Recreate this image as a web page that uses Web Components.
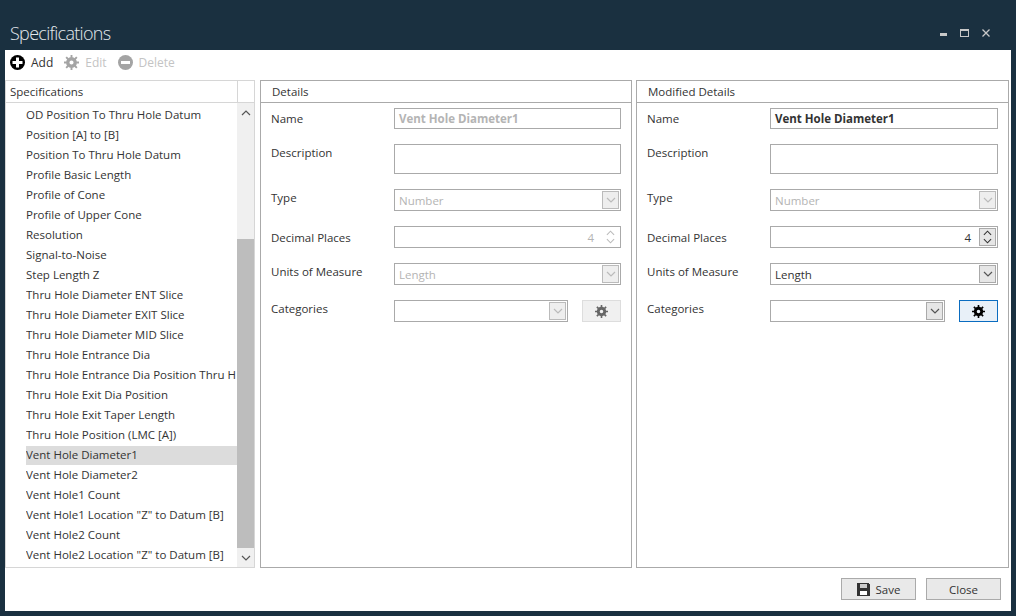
<!DOCTYPE html>
<html>
<head>
<meta charset="utf-8">
<title>Specifications</title>
<style>
  html, body { margin: 0; height: 100%; }
  body { background: #1a3040; font: 11.5px "Open Sans", sans-serif; color: #333; overflow: hidden; }
</style>
</head>
<body>
<spec-window>
  <win-titlebar slot="title">Specifications</win-titlebar>
  <spec-toolbar slot="toolbar"></spec-toolbar>
  <spec-list slot="list"></spec-list>
  <detail-panel slot="details" heading="Details" mode="readonly"></detail-panel>
  <detail-panel slot="modified" heading="Modified Details"></detail-panel>
  <dialog-button slot="footer" icon="save">Save</dialog-button>
  <dialog-button slot="footer">Close</dialog-button>
</spec-window>

<script>
const GEAR = `<svg viewBox="0 0 16 16" width="100%" height="100%"><circle cx="8" cy="8" r="4" fill="none" stroke="currentColor" stroke-width="3.6"/><path fill="none" stroke="currentColor" stroke-width="2" d="M8 0v3M8 13v3M0 8h3M13 8h3M2.3 2.3l2.2 2.2M11.5 11.5l2.2 2.2M13.7 2.3l-2.2 2.2M4.5 11.5l-2.2 2.2"/></svg>`;
const CHEVRON_DOWN = `<svg viewBox="0 0 10 6" width="10" height="6"><path d="M1 1l4 4 4-4" fill="none" stroke="currentColor" stroke-width="1.2"/></svg>`;
const CHEVRON_UP = `<svg viewBox="0 0 10 6" width="10" height="6"><path d="M1 5l4-4 4 4" fill="none" stroke="currentColor" stroke-width="1.2"/></svg>`;

class SpecWindow extends HTMLElement {
    constructor() {
        super();
        this.attachShadow({ mode: 'open' });
        this.shadowRoot.innerHTML = `
            <style>
                :host { display: flex; flex-direction: column; height: 616px; box-sizing: border-box; padding: 0 5px 5px; }
                .client { flex: 1; background: #fff; display: flex; flex-direction: column; min-height: 0; }
                .main { height: 488px; display: flex; }
                ::slotted([slot=list]) { margin-right: 5px; }
                ::slotted([slot=details]) { margin-right: 4px; }
                .footer { flex: 1; display: flex; justify-content: flex-end; gap: 10px; padding: 10px 10px 0 0; box-sizing: border-box; }
            </style>
            <slot name="title"></slot>
            <div class="client">
                <slot name="toolbar"></slot>
                <div class="main">
                    <slot name="list"></slot>
                    <slot name="details"></slot>
                    <slot name="modified"></slot>
                </div>
                <div class="footer"><slot name="footer"></slot></div>
            </div>
        `;
    }
}

class WinTitlebar extends HTMLElement {
    constructor() {
        super();
        this.attachShadow({ mode: 'open' });
        this.shadowRoot.innerHTML = `
            <style>
                :host { display: flex; height: 50px; box-sizing: border-box; padding: 21px 0 0 5px; color: #e4eaee; }
                .title { flex: 1; font-size: 18px; line-height: 24px; font-weight: 300; letter-spacing: -.7px; }
                .controls { display: flex; color: #c8c8c8; padding: 0 21px 0 0; height: 24px; align-items: flex-start; margin-top: 8px; }
                svg { display: block; }
            </style>
            <div class="title"><slot></slot></div>
            <div class="controls">
                <svg width="7" height="8" viewBox="0 0 7 8" style="margin-right:13px"><rect y="4" width="7" height="3" fill="currentColor"/></svg>
                <svg width="9" height="8" viewBox="0 0 9 8" shape-rendering="crispEdges" style="margin-right:13px"><path fill="none" stroke="currentColor" d="M.5 .5h8v7h-8z"/><path stroke="currentColor" d="M0 1.5h9"/></svg>
                <svg width="8" height="8" viewBox="0 0 8 8"><path fill="none" stroke="currentColor" stroke-width="1.3" d="M.5 .5l7 7M7.5 .5l-7 7"/></svg>
            </div>
        `;
    }
}

class SpecToolbar extends HTMLElement {
    constructor() {
        super();
        this.attachShadow({ mode: 'open' });
        this.shadowRoot.innerHTML = `
            <style>
                :host { display: flex; height: 30px; align-items: center; box-sizing: border-box; padding: 0 0 6px 5px; flex: none; font-size: 12px; }
                .tool { display: flex; align-items: center; gap: 6px; margin-right: 11px; }
                .tool.off { color: #c4c4c4; }
                .icon { width: 15px; height: 15px; display: block; }
                .off .icon { color: #a4a4a4; }
            </style>
            <div class="tool">
                <svg class="icon" viewBox="0 0 15 15"><circle cx="7.5" cy="7.5" r="7.5" fill="#000"/><path d="M6 2.5h3V6h3.5v3H9v3.500H6V9H2.500V6H6z" fill="#fff"/></svg>
                <span>Add</span>
            </div>
            <div class="tool off">
                <span class="icon">${GEAR}</span>
                <span>Edit</span>
            </div>
            <div class="tool off">
                <svg class="icon" viewBox="0 0 15 15"><circle cx="7.5" cy="7.5" r="7.5" fill="#a4a4a4"/><rect x="3" y="6" width="9" height="3" fill="#fff"/></svg>
                <span>Delete</span>
            </div>
        `;
    }
}

const SPEC_ITEMS = [
    'OD Position To Thru Hole Datum', 'Position [A] to [B]', 'Position To Thru Hole Datum',
    'Profile Basic Length', 'Profile of Cone', 'Profile of Upper Cone', 'Resolution',
    'Signal-to-Noise', 'Step Length Z', 'Thru Hole Diameter ENT Slice', 'Thru Hole Diameter EXIT Slice',
    'Thru Hole Diameter MID Slice', 'Thru Hole Entrance Dia', 'Thru Hole Entrance Dia Position Thru H',
    'Thru Hole Exit Dia Position', 'Thru Hole Exit Taper Length', 'Thru Hole Position (LMC [A])',
    'Vent Hole Diameter1', 'Vent Hole Diameter2', 'Vent Hole1 Count',
    'Vent Hole1 Location "Z" to Datum [B]', 'Vent Hole2 Count', 'Vent Hole2 Location "Z" to Datum [B]'
];

class SpecList extends HTMLElement {
    constructor() {
        super();
        this.attachShadow({ mode: 'open' });
        const rows = SPEC_ITEMS.map(item =>
            `<div class="row${item === 'Vent Hole Diameter1' ? ' selected' : ''}">${item}</div>`
        ).join('');
        this.shadowRoot.innerHTML = `
            <style>
                :host { display: flex; flex-direction: column; width: 250px; flex: none; box-sizing: border-box; border: 1px solid #d6d6d6; }
                .head { display: flex; height: 21px; flex: none; border-bottom: 1px solid #d6d6d6; line-height: 21px; }
                .head .label { width: 232px; padding-left: 4px; box-sizing: border-box; border-right: 1px solid #d6d6d6; }
                .body { flex: 1; display: flex; min-height: 0; }
                .rows { flex: 1; min-width: 0; padding-top: 2px; overflow: hidden; }
                .row { height: 20px; line-height: 20px; margin-left: 20px; white-space: nowrap; overflow: hidden; box-sizing: border-box; }
                .selected { background: #dcdcdc; border-top: 1px solid #fff; line-height: 18px; }
                .bar { width: 17px; flex: none; background: #f0f0f0; display: flex; flex-direction: column; color: #555; }
                .arrow { height: 19px; display: flex; align-items: center; justify-content: center; flex: none; }
                .track { flex: 1; display: flex; flex-direction: column; }
                .thumb { margin-top: 117px; flex: 1; background: #bdbdbd; }
                svg { display: block; }
            </style>
            <div class="head"><div class="label">Specifications</div></div>
            <div class="body">
                <div class="rows">${rows}</div>
                <div class="bar">
                    <div class="arrow">${CHEVRON_UP}</div>
                    <div class="track"><div class="thumb"></div></div>
                    <div class="arrow">${CHEVRON_DOWN}</div>
                </div>
            </div>
        `;
    }
}

class DetailPanel extends HTMLElement {
    constructor() {
        super();
        this.attachShadow({ mode: 'open' });
    }

    connectedCallback() {
        const heading = this.getAttribute('heading');
        const ro = this.getAttribute('mode') === 'readonly';
        const off = ro ? 'disabled' : '';
        this.shadowRoot.innerHTML = `
            <style>
                :host { display: flex; flex-direction: column; width: ${ro ? 372 : 373}px; box-sizing: border-box; border: 1px solid #aaa; flex: none; position: relative; }
                .head { height: 21px; line-height: 21px; padding-left: 11px; border-bottom: 1px solid #aaa; flex: none; }
                .form { display: grid; grid-template-columns: 123px 1fr; row-gap: 15px; padding: 5px 10px 0 10px; align-items: start; }
                .label { line-height: 18px; }
                .cats { display: flex; gap: 14px; }
                .cats form-combo { flex: 1; }
                .splitter { position: absolute; left: -4px; top: 220px; width: 3px; height: 15px; background-image: radial-gradient(circle, #bbb 45%, transparent 50%); background-size: 2px 2px; }
            </style>
            ${ro ? '<div class="splitter"></div>' : ''}
            <div class="head">${heading}</div>
            <div class="form">
                <div class="label" style="padding-top:2px">Name</div>
                <form-text bold ${off} value="Vent Hole Diameter1"></form-text>
                <div class="label">Description</div>
                <form-text tall></form-text>
                <div class="label">Type</div>
                <form-combo disabled value="Number"></form-combo>
                <div class="label" style="padding-top:3px">Decimal Places</div>
                <form-spin ${off} value="4"></form-spin>
                <div class="label">Units of Measure</div>
                <form-combo ${off} value="Length"></form-combo>
                <div class="label">Categories</div>
                <div class="cats">
                    <form-combo ${off}></form-combo>
                    <gear-button ${off}></gear-button>
                </div>
            </div>
        `;
    }
}

const FIELD_CSS = `
    :host { display: flex; height: 22px; box-sizing: border-box; border: 1px solid #aaa; background: #fff; align-items: center; }
    :host([disabled]) { color: #b4b4b4; }
    .text { flex: 1; padding-left: 4px; white-space: nowrap; overflow: hidden; }
    .btn { width: 15px; height: 16px; margin-right: 1px; border: 1px solid #aaa; background: #e6e6e6; color: #555; display: flex; flex-direction: column; align-items: center; justify-content: center; flex: none; }
    :host([disabled]) .btn { background: #eee; color: #bbb; border-color: #bbb; }
    svg { display: block; }
`;

class FormText extends HTMLElement {
    constructor() {
        super();
        this.attachShadow({ mode: 'open' });
    }

    connectedCallback() {
        this.shadowRoot.innerHTML = `
            <style>
                ${FIELD_CSS}
                :host { height: 21px; }
                :host([tall]) { height: 30px; }
                :host([bold]) .text { font-weight: 700; }
            </style>
            <div class="text">${this.getAttribute('value') || ''}</div>
        `;
    }
}

class FormCombo extends HTMLElement {
    constructor() {
        super();
        this.attachShadow({ mode: 'open' });
    }

    connectedCallback() {
        this.shadowRoot.innerHTML = `
            <style>${FIELD_CSS}</style>
            <div class="text">${this.getAttribute('value') || ''}</div>
            <div class="btn">${CHEVRON_DOWN}</div>
        `;
    }
}

class FormSpin extends HTMLElement {
    constructor() {
        super();
        this.attachShadow({ mode: 'open' });
    }

    connectedCallback() {
        this.shadowRoot.innerHTML = `
            <style>
                ${FIELD_CSS}
                .text { text-align: right; padding-right: 8px; }
                .btn { gap: 2px; color: #333; }
                .btn svg { width: 9px; height: 6px; }
                :host([disabled]) .btn { background: none; border-color: transparent; }
            </style>
            <div class="text">${this.getAttribute('value') || ''}</div>
            <div class="btn">${CHEVRON_UP}${CHEVRON_DOWN}</div>
        `;
    }
}

class GearButton extends HTMLElement {
    constructor() {
        super();
        this.attachShadow({ mode: 'open' });
    }

    connectedCallback() {
        this.shadowRoot.innerHTML = `
            <style>
                :host { display: flex; width: 39px; height: 22px; box-sizing: border-box; border: 1px solid #0a6cc0; background: #e8f0f8; color: #000; align-items: center; justify-content: center; flex: none; }
                :host([disabled]) { border-color: #ddd; background: #f0f0f0; color: #666; }
                .icon { width: 13px; height: 13px; display: block; }
            </style>
            <span class="icon">${GEAR}</span>
        `;
    }
}

class DialogButton extends HTMLElement {
    constructor() {
        super();
        this.attachShadow({ mode: 'open' });
    }

    connectedCallback() {
        const save = this.getAttribute('icon') === 'save'
            ? `<svg width="13" height="13" viewBox="0 0 13 13" shape-rendering="crispEdges"><path d="M0 0h11l2 2v11H0z" fill="#333"/><rect x="3" y="1" width="7" height="4" fill="#ccc"/><rect x="3" y="8" width="7" height="4" fill="#fff"/></svg>`
            : '';
        this.shadowRoot.innerHTML = `
            <style>
                :host { display: flex; width: 75px; height: 22px; box-sizing: border-box; border: 1px solid #aaa; background: #e9e9e9; align-items: center; justify-content: center; gap: 6px; }
                svg { display: block; }
            </style>
            ${save}<slot></slot>
        `;
    }
}

customElements.define('spec-window', SpecWindow);
customElements.define('win-titlebar', WinTitlebar);
customElements.define('spec-toolbar', SpecToolbar);
customElements.define('spec-list', SpecList);
customElements.define('detail-panel', DetailPanel);
customElements.define('form-text', FormText);
customElements.define('form-combo', FormCombo);
customElements.define('form-spin', FormSpin);
customElements.define('gear-button', GearButton);
customElements.define('dialog-button', DialogButton);
</script>
</body>
</html>
